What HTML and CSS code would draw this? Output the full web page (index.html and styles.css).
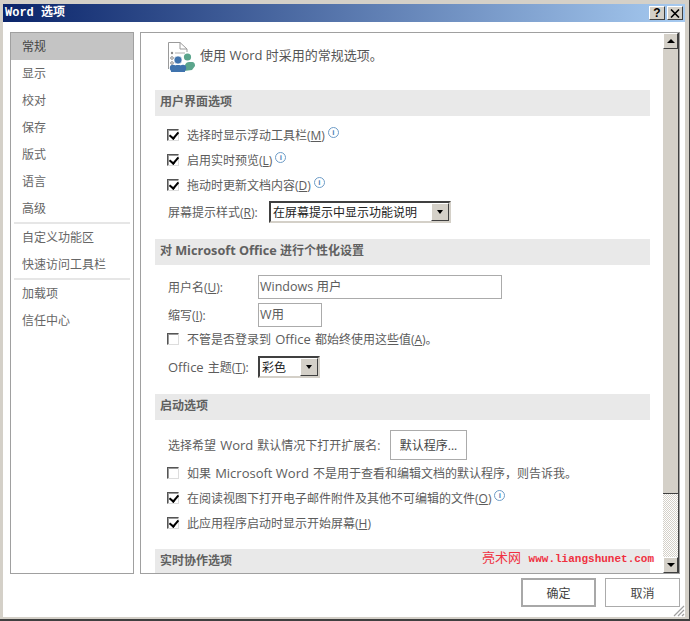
FILE: index.html
```html
<!DOCTYPE html>
<html lang="zh-CN">
<head>
<meta charset="utf-8">
<title>Word 选项</title>
<link rel="stylesheet" href="styles.css">
</head>
<body>
<div class="window">
  <header class="titlebar">
    <span class="title">Word 选项</span>
    <span class="title-btns">
      <span class="title-btn help">?</span>
      <span class="title-btn"><svg width="10" height="9" viewBox="0 0 10 9"><path d="M1 0.5 9 8.5M9 0.5 1 8.5" stroke="#000" stroke-width="1.6" fill="none"/></svg></span>
    </span>
  </header>
  <div class="content">
    <nav class="sidebar">
      <div class="nav-item selected">常规</div>
      <div class="nav-item">显示</div>
      <div class="nav-item">校对</div>
      <div class="nav-item">保存</div>
      <div class="nav-item">版式</div>
      <div class="nav-item">语言</div>
      <div class="nav-item">高级</div>
      <div class="nav-sep"></div>
      <div class="nav-item">自定义功能区</div>
      <div class="nav-item">快速访问工具栏</div>
      <div class="nav-sep"></div>
      <div class="nav-item">加载项</div>
      <div class="nav-item">信任中心</div>
    </nav>
    <main class="pane">
      <div class="scroll-content">
        <div class="intro">
          <svg class="intro-icon" width="30" height="32" viewBox="0 0 30 32">
            <path d="M1.5 28V1.5H13L20 8V11M13 1.5V8H20" fill="none" stroke="#9a9a9a"/>
            <circle cx="5" cy="12" r="1.2" fill="#8a8a8a"/>
            <circle cx="5" cy="17" r="1.3" fill="none" stroke="#8a8a8a"/>
            <circle cx="5" cy="22" r="1.3" fill="none" stroke="#8a8a8a"/>
            <path d="M8 12H18" stroke="#b0b0b0"/>
            <circle cx="20.500" cy="16" r="3.600" fill="#5ba58c"/>
            <circle cx="24" cy="24" r="3" fill="#5ba58c"/>
            <path d="M17 30c0-6 2-9 5-9h3c2 0 3 1 3 4l-3 4z" fill="#5ba58c"/>
            <circle cx="11" cy="19" r="4" fill="#3f73ad" stroke="#fff" stroke-width="0.6"/>
            <circle cx="6" cy="27" r="3.200" fill="#3f73ad"/>
            <circle cx="16" cy="27" r="3.200" fill="#3f73ad"/>
            <path d="M4 31c0-5 3-7 7-7s7 2 7 7z" fill="#3f73ad"/>
          </svg>
          <span>使用 Word 时采用的常规选项。</span>
        </div>

        <h2 class="section first">用户界面选项</h2>
        <div class="check-row"><span class="box checked"></span><span>选择时显示浮动工具栏(<u>M</u>)</span><span class="info">i</span></div>
        <div class="check-row"><span class="box checked"></span><span>启用实时预览(<u>L</u>)</span><span class="info">i</span></div>
        <div class="check-row"><span class="box checked"></span><span>拖动时更新文档内容(<u>D</u>)</span><span class="info">i</span></div>
        <div class="field-row tip-row">
          <span class="label tip-label">屏幕提示样式(<u>R</u>):</span>
          <span class="select tip-select"><span class="select-val">在屏幕提示中显示功能说明</span><span class="select-arrow"></span></span>
        </div>

        <h2 class="section personal">对 <span class="latin">Microsoft Office</span> 进行个性化设置</h2>
        <div class="field-row user-row">
          <span class="label field-label">用户名(<u>U</u>):</span>
          <span class="input input-name">Windows 用户</span>
        </div>
        <div class="field-row abbr-row">
          <span class="label field-label">缩写(<u>I</u>):</span>
          <span class="input input-abbr">W用</span>
        </div>
        <div class="check-row always-row"><span class="box"></span><span>不管是否登录到 <span class="latin">Office</span> 都始终使用这些值(<u>A</u>)。</span></div>
        <div class="field-row theme-row">
          <span class="label field-label"><span class="latin lead">Office</span> 主题(<u>T</u>):</span>
          <span class="select theme-select"><span class="select-val">彩色</span><span class="select-arrow"></span></span>
        </div>

        <h2 class="section startup">启动选项</h2>
        <div class="field-row ext-row">
          <span class="label ext-label">选择希望 <span class="latin">Word</span> 默认情况下打开扩展名:</span>
          <span class="plain-btn">默认程序...</span>
        </div>
        <div class="check-row first-after"><span class="box"></span><span>如果 <span class="latin">Microsoft Word</span> 不是用于查看和编辑文档的默认程序，则告诉我。</span></div>
        <div class="check-row"><span class="box checked"></span><span>在阅读视图下打开电子邮件附件及其他不可编辑的文件(<u>O</u>)</span><span class="info">i</span></div>
        <div class="check-row"><span class="box checked"></span><span>此应用程序启动时显示开始屏幕(<u>H</u>)</span></div>

        <h2 class="section collab">实时协作选项</h2>
      </div>
      <div class="scrollbar">
        <span class="sb-btn"><span class="tri up"></span></span>
        <span class="sb-thumb"></span>
        <span class="sb-track"></span>
        <span class="sb-btn"><span class="tri"></span></span>
      </div>
      <div class="watermark"><span class="wm-cn">亮术网</span> www.liangshunet.com</div>
    </main>
  </div>
  <footer class="footer">
    <span class="dlg-btn default">确定</span>
    <span class="dlg-btn">取消</span>
    <svg class="grip" width="12" height="12" viewBox="0 0 12 12"><path d="M11 1 1 11M11 5 5 11M11 9 9 11" stroke="#a0a0a0" stroke-width="1.2" fill="none"/></svg>
  </footer>
</div>
</body>
</html>
```
FILE: styles.css
```css
* { box-sizing: border-box; }
html, body { margin: 0; padding: 0; }
body {
  width: 690px;
  height: 621px;
  overflow: hidden;
  font-family: "Open Sans", "Noto Sans CJK SC", sans-serif;
  font-size: 12px;
  color: #5c5c5c;
  background: #d4d0c8;
}
u { text-underline-offset: 1px; }
.latin { font-size: 13px; line-height: 1; margin: 0 1px; }
.latin.lead { margin-left: 0; }
.section .latin { font-size: 12.7px; margin: 0; }

.window {
  width: 690px;
  height: 621px;
  display: flex;
  flex-direction: column;
  padding: 4px 4px 2px 3px;
  background: #d4d0c8;
  border-right: 1px solid #404040;
  border-bottom: 2px solid #404040;
}

.titlebar {
  height: 18px;
  flex: none;
  display: flex;
  align-items: center;
  justify-content: space-between;
  padding: 0 2px;
  background: linear-gradient(90deg, #0a246a, #a6caf0);
  color: #fff;
}
.title {
  font: bold 12px/18px "Liberation Mono", "Noto Sans CJK SC", monospace;
}
.title-btns { display: flex; gap: 2px; }
.title-btn {
  width: 16px;
  height: 14px;
  display: flex;
  align-items: center;
  justify-content: center;
  background: #d4d0c8;
  border: 1px solid;
  border-color: #fff #404040 #404040 #fff;
  color: #000;
}
.help { font: bold 12px/12px "Liberation Sans", sans-serif; }

.content {
  flex: 1;
  min-height: 0;
  display: flex;
  gap: 6px;
  padding: 10px 6px 0 7px;
  background: #fff;
}

.sidebar {
  width: 124px;
  height: 542px;
  flex: none;
  border: 1px solid #a0a0a0;
}
.nav-item {
  height: 27px;
  padding-left: 11px;
  line-height: 28px;
  color: #666;
}
.nav-item.selected {
  background: #c4c4c4;
  color: #444;
}
.nav-sep {
  height: 2px;
  margin: 0 3px;
  background: #e6e6e6;
}

.pane {
  position: relative;
  width: 540px;
  height: 542px;
  flex: none;
  display: flex;
  border: 1px solid #a0a0a0;
}
.scroll-content {
  flex: 1;
  min-width: 0;
  overflow: hidden;
  padding-left: 14px;
}

.intro {
  height: 57px;
  display: flex;
  align-items: center;
  gap: 3px;
  padding: 0 0 14px 12px;
  font-size: 13px;
  color: #555;
}
.intro-icon { flex: none; margin-top: 4px; }

.section {
  width: 495px;
  height: 26px;
  margin: 0;
  padding-left: 5px;
  background: #e9e9e9;
  font-size: 12px;
  line-height: 23px;
  font-weight: bold;
  color: #606060;
}
.section.personal { margin-top: 15px; }
.section.startup { margin-top: 16px; }
.section.collab { margin-top: 14px; }

.check-row {
  height: 25px;
  display: flex;
  align-items: center;
  padding-left: 12px;
}
.section.first + .check-row { margin-top: 6px; }
.always-row { height: 24px; }

.box {
  width: 12px;
  height: 12px;
  flex: none;
  margin-right: 8px;
  background: #fff;
  border: 1px solid;
  border-color: #555 #ddd #ddd #555;
  box-shadow: inset 1px 1px 0 #999;
  position: relative;
}
.box.checked::after {
  content: "";
  position: absolute;
  left: 3px;
  top: 0;
  width: 4px;
  height: 7px;
  border: solid #000;
  border-width: 0 2px 2px 0;
  transform: rotate(40deg);
}

.info {
  width: 11px;
  height: 11px;
  flex: none;
  margin: -4px 0 0 3px;
  border: 1px solid #6d9cc7;
  border-radius: 50%;
  font: bold 8px/9px "Liberation Sans", sans-serif;
  text-align: center;
  color: #4b82b8;
}

.field-row {
  display: flex;
  align-items: center;
  padding-left: 13px;
}
.tip-row { height: 24px; margin-top: 3px; }
.tip-label { width: 101px; }
.field-label { width: 90px; }
.user-row { height: 24px; margin-top: 10px; }
.abbr-row { height: 24px; margin-top: 4px; }
.theme-row { height: 22px; margin-top: 5px; }
.ext-row { height: 31px; margin-top: 9px; }
.ext-label { width: 222px; }

.select {
  height: 22px;
  display: flex;
  align-items: center;
  background: #fff;
  border: 2px solid;
  border-color: #404040 #d4d0c8 #d4d0c8 #404040;
  color: #222;
}
.tip-select { width: 182px; }
.theme-select { width: 62px; }
.select-val { flex: 1; padding-left: 2px; }
.select-arrow {
  width: 18px;
  height: 18px;
  display: flex;
  align-items: center;
  justify-content: center;
  background: #d4d0c8;
  border: 1px solid;
  border-color: #fff #404040 #404040 #fff;
}
.select-arrow::after {
  content: "";
  border: 3.5px solid transparent;
  border-top: 4px solid #000;
  border-bottom: 0;
}

.input {
  height: 24px;
  display: flex;
  align-items: center;
  padding: 0 0 4px 1px;
  border: 1px solid #ababab;
  background: #fff;
  font-size: 12.5px;
}
.input-name { width: 244px; }
.input-abbr { width: 64px; }

.plain-btn {
  width: 77px;
  height: 30px;
  display: flex;
  align-items: center;
  justify-content: center;
  border: 1px solid #ababab;
  color: #444;
}

.scrollbar {
  width: 16px;
  flex: none;
  display: flex;
  flex-direction: column;
  border-right: 1px solid #404040;
}
.sb-btn {
  height: 16px;
  flex: none;
  display: flex;
  align-items: center;
  justify-content: center;
  background: #d4d0c8;
  border: 1px solid;
  border-color: #fff #404040 #404040 #fff;
}
.tri {
  border: 4px solid transparent;
  border-top: 4px solid #000;
  border-bottom: 0;
}
.tri.up {
  border-top: 0;
  border-bottom: 4px solid #000;
}
.sb-thumb {
  height: 445px;
  flex: none;
  background: #d4d0c8;
  border-bottom: 1px solid #404040;
}
.sb-track {
  flex: 1;
  background: repeating-conic-gradient(#d4d0c8 0 25%, #fff 0 50%) 0 0 / 2px 2px;
}

.watermark {
  position: absolute;
  left: 341px;
  top: 516px;
  font: bold 11px/16px "Liberation Mono", monospace;
  color: #f03040;
  white-space: nowrap;
}
.wm-cn { font: 13px/16px "Noto Sans CJK SC", sans-serif; margin-right: 1px; }

.footer {
  position: relative;
  flex: none;
  height: 43px;
  display: flex;
  justify-content: flex-end;
  gap: 9px;
  padding: 4px 5px 0 0;
  background: #fff;
}
.dlg-btn {
  width: 75px;
  height: 29px;
  display: flex;
  align-items: center;
  justify-content: center;
  border: 1px solid #ababab;
  color: #444;
}
.dlg-btn.default { border: 2px solid #a8a8a8; }
.grip { position: absolute; right: 0; bottom: 0; }
```
